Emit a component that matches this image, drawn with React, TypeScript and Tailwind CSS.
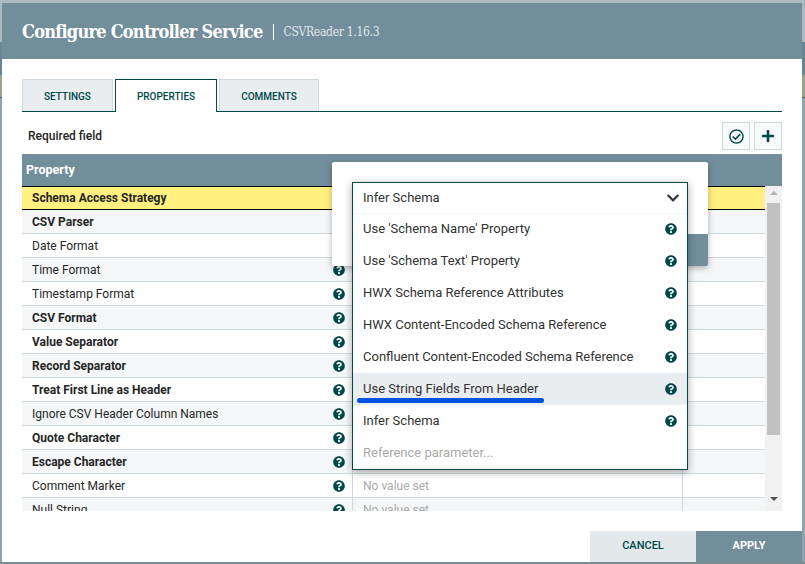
import { FaQuestionCircle, FaRegCheckCircle, FaPlus, FaChevronDown } from "react-icons/fa";

const rows: [string, boolean][] = [
  ["CSV Parser", true],
  ["Date Format", false],
  ["Time Format", false],
  ["Timestamp Format", false],
  ["CSV Format", true],
  ["Value Separator", true],
  ["Record Separator", true],
  ["Treat First Line as Header", true],
  ["Ignore CSV Header Column Names", false],
  ["Quote Character", true],
  ["Escape Character", true],
  ["Comment Marker", false],
  ["Null String", false],
];

const options = [
  "Use 'Schema Name' Property",
  "Use 'Schema Text' Property",
  "HWX Schema Reference Attributes",
  "HWX Content-Encoded Schema Reference",
  "Confluent Content-Encoded Schema Reference",
  "Use String Fields From Header",
  "Infer Schema",
];

function Tab({ label, active, w }: { label: string; active?: boolean; w: string }) {
  return (
    <div
      className={
        active
          ? `${w} h-[33px] -mb-px z-10 pt-[1px] flex items-center justify-center bg-white border border-b-0 border-[#004849] text-[10px] font-medium text-[#004849]`
          : `${w} h-[32px] pt-[2px] flex items-center justify-center bg-[#e9edf0] border border-b-0 border-[#cfd8dc] text-[10px] font-medium text-[#004849]`
      }
    >
      {label}
    </div>
  );
}

export default function App() {
  return (
    <div
      className="relative w-[805px] h-[564px] overflow-hidden pt-[3px] px-[2px] pb-[2px] bg-[linear-gradient(#a9bac1_0,#a9bac1_42px,#688593_42px,#688593_75px,#9ba38f_75px,#9ba38f_97px,#4f6468_97px,#4f6468_98px,#8da2ac_98px,#8da2ac_562px,#7b8b92_562px)]"
      style={{ fontFamily: "Roboto, sans-serif" }}
    >
      <div className="w-[800px] h-[559px] bg-white flex flex-col">
        <div className="h-[56px] bg-[#728e9b] flex items-center pl-[20px] pt-[1px] shrink-0">
          <span
            className="text-[18px] font-bold text-white leading-none tracking-[-0.75px]"
            style={{ fontFamily: "'DejaVu Serif Condensed', 'DejaVu Serif', serif" }}
          >
            Configure Controller Service
          </span>
          <span className="w-px h-[16px] bg-white ml-[11px] mr-[9px]" />
          <span
            className="text-[12px] text-[#e3e8eb] leading-none tracking-[-0.3px]"
            style={{ fontFamily: "'DejaVu Serif Condensed', 'DejaVu Serif', serif" }}
          >
            CSVReader 1.16.3
          </span>
        </div>

        <div className="relative flex-1 flex flex-col px-[20px] pt-[20px]">
          <div className="flex gap-[2px] border-b border-[#004849] h-[33px] shrink-0 items-start">
            <Tab label="SETTINGS" w="w-[91px]" />
            <Tab label="PROPERTIES" active w="w-[102px]" />
            <Tab label="COMMENTS" w="w-[100px]" />
          </div>

          <div className="flex items-center justify-between h-[28px] mt-[10px] shrink-0">
            <span className="pl-[6px] text-[12px] font-medium text-[#262626]">Required field</span>
            <div className="flex gap-[4px]">
              <div className="w-[28px] h-[28px] bg-[#f7f9fa] border border-[#cfd8dc] flex items-center justify-center text-[#004849]">
                <FaRegCheckCircle size={15} />
              </div>
              <div className="w-[28px] h-[28px] bg-[#f7f9fa] border border-[#cfd8dc] flex items-center justify-center text-[#004849]">
                <FaPlus size={14} />
              </div>
            </div>
          </div>

          <div className="mt-[4px] w-[760px] h-[357px] flex flex-col overflow-hidden shrink-0">
            <div className="h-[32px] bg-[#728e9b] flex items-center pl-[4px] text-[12.5px] font-bold text-white shrink-0">
              Property
            </div>
            <div className="flex h-[325px]">
              <div className="w-[743px] overflow-hidden">
                <div className="h-[24px] bg-[#fff07f] border-y border-black flex items-center pl-[10px] text-[12px] font-bold text-[#262626]">
                  Schema Access Strategy
                </div>
                {rows.map(([name, bold], i) => (
                  <div
                    key={name}
                    className={
                      i % 2 === 0
                        ? "h-[24px] bg-[#f4f6f7] border-b border-[#cfd8dc] flex items-stretch text-[12px]"
                        : "h-[24px] bg-white border-b border-[#cfd8dc] flex items-stretch text-[12px]"
                    }
                  >
                    <div className="w-[331px] flex items-center justify-between pl-[10px] pr-[7px] border-r border-[#cfd8dc]">
                      <span className={bold ? "font-bold text-[#262626]" : "text-[#262626]"}>{name}</span>
                      <FaQuestionCircle size={12} className="text-[#004849]" />
                    </div>
                    <div className="w-[330px] flex items-center pl-[10px] border-r border-[#cfd8dc] text-[#aaaaaa]">
                      No value set
                    </div>
                  </div>
                ))}
              </div>
              <div className="flex-1 bg-[#f1f1f1] flex flex-col items-center pr-[2px] pl-[2px]">
                <div className="w-0 h-0 mt-[5px] border-x-[4px] border-x-transparent border-b-[4px] border-b-[#b4b4b4]" />
                <div className="w-[13px] h-[232px] bg-[#c1c1c1] mt-[8px]" />
                <div className="w-0 h-0 mt-[62px] border-x-[4px] border-x-transparent border-t-[4px] border-t-[#505050]" />
              </div>
            </div>
          </div>

          <div className="absolute right-0 bottom-0 flex h-[31px]">
            <div className="w-[106px] bg-[#e3e8eb] flex items-center justify-center text-[11px] font-medium text-[#004849]">
              CANCEL
            </div>
            <div className="w-[106px] bg-[#728e9b] flex items-center justify-center text-[11px] font-bold text-white">
              APPLY
            </div>
          </div>

          <div className="absolute left-[330px] top-[103px] w-[376px] h-[104px] bg-white rounded-[2px] shadow-[0_2px_6px_rgba(0,0,0,0.3)] flex flex-col justify-end items-end">
            <div className="w-[80px] h-[32px] bg-[#728e9b] rounded-br-[2px]" />
          </div>

          <div className="absolute left-[350px] top-[123px] w-[336px] h-[288px] bg-white border border-[#004849] shadow-[0_2px_8px_rgba(0,0,0,0.35)] text-[13px] text-[#333333] flex flex-col">
            <div className="h-[30px] flex items-center justify-between pl-[10px] pr-[7px] shrink-0 shadow-[0_1px_2px_rgba(0,0,0,0.05)]">
              <span>Infer Schema</span>
              <FaChevronDown size={14} className="text-[#333333]" />
            </div>
            {options.map((o) => (
              <div
                key={o}
                className={
                  o === "Use String Fields From Header"
                    ? "h-[32px] shrink-0 flex items-center justify-between pl-[10px] pr-[10px] bg-[#e9edf0]"
                    : "h-[32px] shrink-0 flex items-center justify-between pl-[10px] pr-[10px]"
                }
              >
                <span>{o}</span>
                <FaQuestionCircle size={12} className="text-[#004849]" />
              </div>
            ))}
            <div className="h-[32px] shrink-0 flex items-center pl-[10px] text-[#aaaaaa]">Reference parameter...</div>
            <div className="absolute left-[4px] top-[215px] w-[187px] h-[5px] rounded-full bg-[#0052e0]" />
          </div>
        </div>
      </div>
    </div>
  );
}
